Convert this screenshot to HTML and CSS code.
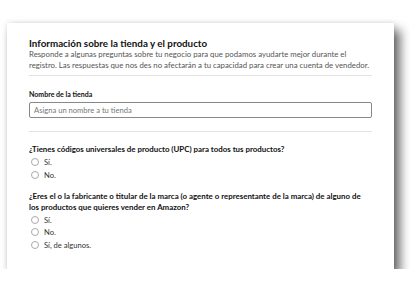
FILE: index.html
```
<!DOCTYPE html>
<html lang="es">
<head>
  <meta charset="UTF-8" />
  <title>Información sobre la tienda y el producto</title>
  <link rel="stylesheet" href="styles.css">
</head>
<body>
  <div class="card">
    <h2>Información sobre la tienda y el producto</h2>
    <p class="intro">Responde a algunas preguntas sobre tu negocio para que podamos ayudarte mejor durante el registro. Las respuestas que nos des no afectarán a tu capacidad para crear una cuenta de vendedor.</p>
    <hr>
    <label class="field-label" for="storeName">Nombre de la tienda</label>
    <input type="text" id="storeName" placeholder="Asigna un nombre a tu tienda">
    <hr>
    <div class="question">
      <p class="q-text">¿Tienes códigos universales de producto (UPC) para todos tus productos?</p>
      <label class="radio"><span class="dot"></span>Sí.</label>
      <label class="radio"><span class="dot"></span>No.</label>
    </div>
    <div class="question second">
      <p class="q-text">¿Eres el o la fabricante o titular de la marca (o agente o representante de la marca) de alguno de los productos que quieres vender en Amazon?</p>
      <label class="radio"><span class="dot"></span>Sí.</label>
      <label class="radio"><span class="dot"></span>No.</label>
      <label class="radio"><span class="dot"></span>Sí, de algunos.</label>
    </div>
  </div>
</body>
</html>
```
FILE: styles.css
```
body {
  margin: 0;
  background: #fff;
  font-family: 'Lato', 'Open Sans', Arial, sans-serif;
  color: #111;
}
.card {
  box-sizing: border-box;
  width: 387px;
  height: 246px;
  margin: 23px 0 0 7px;
  padding: 14px 22px 0 22px;
  background: #fff;
  box-shadow: 6px 7px 10px rgba(0,0,0,0.6), 0 0 5px rgba(0,0,0,0.12);
}
h2 {
  margin: 0;
  font-size: 9.8px;
  line-height: 12px;
  font-weight: 700;
  color: #111;
}
.intro {
  margin: 0;
  font-size: 7.8px;
  line-height: 10.6px;
  color: #555;
}
hr {
  border: none;
  border-top: 1px solid #e3e3e3;
  margin: 5px 0 0 0;
}
.field-label {
  display: block;
  margin-top: 13px;
  font-size: 7px;
  line-height: 10px;
  font-weight: 700;
}
input {
  box-sizing: border-box;
  display: block;
  width: 100%;
  height: 16px;
  margin-top: 3px;
  padding: 0 4px;
  border: 1px solid #888;
  border-radius: 2px;
  font-family: inherit;
  font-size: 7.6px;
  color: #111;
}
input::placeholder { color: #777; }
input + hr { margin-top: 13px; }
.question { margin-top: 12px; }
.question.second { margin-top: 10px; }
.q-text {
  margin: 0 0 1px 0;
  font-size: 7.9px;
  line-height: 11px;
  font-weight: 700;
}
.radio {
  display: flex;
  align-items: center;
  height: 12.3px;
  font-size: 7.6px;
  color: #333;
}
.dot {
  box-sizing: border-box;
  width: 8px;
  height: 8px;
  margin: 0 5px 0 2px;
  border: 1px solid #aaa;
  border-radius: 50%;
  background: #fff;
}
```
